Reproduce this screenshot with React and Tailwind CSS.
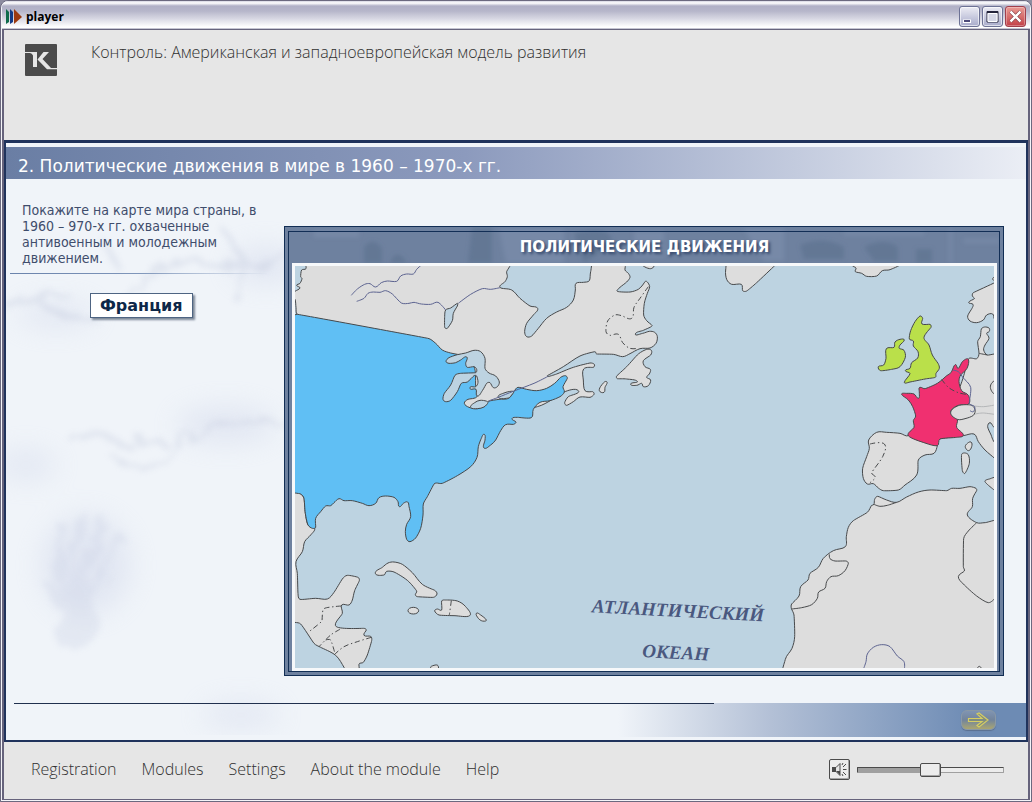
import React, { useState } from "react";

const MENU_ITEMS = ["Registration", "Modules", "Settings", "About the module", "Help"];

// ---- Map data: every group of points is local to its own origin ----
const NORTH_AMERICA = "69,120 66,146 53,150 50,170 54,176 48,190 38,196 48,204 33,214 20,225 33,238 36,262 40,283 200,400 500,600 760,560 840,516 883,512 853,530 842,548 848,556 868,545 888,531 918,532 930,523 926,515 903,512 898,480 899,447 928,442 931,433 918,429 868,442 818,462 792,470 790,467 838,440 888,408 933,395 938,402 988,403 1016,410 1038,401 1068,386 1098,384 1116,370 1120,350 1112,337 1096,334 1076,340 1054,342 1078,331 1098,322 1104,316 1088,302 1079,285 1081,250 1090,220 1097,200 1090,186 1084,184 1076,195 1063,208 1038,216 1000,214 1008,202 1028,186 1038,172 1033,160 1023,150 1020,120 933,120 920,155 916,182 898,187 876,190 874,210 868,240 848,262 818,276 788,295 763,325 743,348 728,350 722,335 728,310 748,285 761,265 738,258 708,235 683,210 648,202 663,185 670,170 668,155 680,120";
const USA = "40,283 432,355 455,370 475,390 500,399 520,403 548,410 572,445 575,500 580,529 552,538 541,550 555,562 580,566 602,558 614,544 645,538 674,535 690,514 702,502 728,508 758,512 788,505 812,490 830,472 844,467 850,475 837,500 841,516 828,530 798,542 768,547 748,568 742,593 700,592 684,596 696,606 688,613 665,614 650,632 635,660 620,675 600,684 603,660 601,643 592,655 583,680 579,712 560,740 520,767 475,790 458,789 450,792 430,830 418,852 417,885 410,925 395,954 378,965 368,958 364,935 368,913 380,890 375,860 371,846 358,850 346,860 342,845 330,832 305,828 285,833 275,850 255,857 235,850 205,842 180,842 165,836 150,848 140,857 125,858 110,875 95,895 95,922 85,925 72,915 64,880 60,835 50,822 20,810 20,310";
const CENTRAL_AMERICA = "20,270 50,282 60,295 64,340 72,375 92,385 80,405 62,425 55,455 36,485 40,520 42,580 48,598 95,595 130,597 150,577 175,537 190,526 222,532 226,542 212,572 205,600 195,615 173,615 175,640 157,680 240,685 247,690 240,706 260,709 263,722 250,765 238,787 225,792 224,830 195,830 180,802 155,766 110,742 90,730 50,672 20,660";
const GREAT_LAKES = "486,424 495,413 520,404 545,399 570,391 590,395 603,415 603,445 615,459 635,468 646,486 640,500 628,503 618,488 608,490 595,512 580,528 576,508 560,508 560,500 575,500 582,487 578,468 570,467 550,486 532,490 520,515 500,541 485,545 477,538 481,520 500,495 513,466 530,460 575,458 578,448 570,440 550,442 545,430 548,411 530,420 515,428 495,430";
const EUROPE = "355,297 380,296 387,280 383,245 391,230 394,207 404,201 417,204 418,214 410,220 417,235 405,255 401,270 412,285 450,287 450,610 434,595 405,570 385,545 372,522 340,527 265,537 262,557 252,580 225,585 205,600 200,645 165,675 145,690 100,692 85,684 70,671 52,672 40,655 38,625 50,590 58,565 56,540 80,517 110,517 150,520 175,527 240,480 320,400";
const FRANCE = "355,298 351,325 332,345 327,365 335,392 355,406 356,432 325,436 302,456 322,478 320,502 340,525 320,532 270,537 262,557 225,549 175,527 192,502 190,482 197,468 188,440 175,420 155,403 170,400 192,402 205,415 208,400 207,384 213,382 225,386 262,370 290,347 303,338 312,318 318,314 325,325 338,304";
const BRITAIN = "210,168 218,175 216,192 240,193 243,202 222,232 237,255 247,285 264,310 268,325 258,340 256,352 225,357 180,366 163,367 180,341 166,332 180,325 185,308 203,294 204,275 190,258 190,243 178,237 182,212 195,185";
const IRELAND = "163,240 150,238 135,246 132,262 109,266 108,295 101,315 85,320 92,332 125,328 150,320 166,292 162,271 148,265 150,255";
const AFRICA = "618,55 600,50 570,55 545,55 530,62 480,60 445,66 410,81 380,97 350,90 323,79 314,88 312,103 304,107 292,127 250,152 235,172 229,200 226,230 190,242 160,265 145,292 120,310 114,330 92,350 87,378 65,402 64,415 72,435 74,500 66,535 46,568 45,630 720,630 720,158 645,158 620,158 592,135 607,110 608,85 620,62";

const STROKE = "#47494b";
const RIVER = "#5c6390";
const LAND = "#dddddd";
const SEA = "#bdd3e1";

// Turns "x,y x,y ..." into a soft curve; the handles never outgrow the shorter neighbour
function curve(text, closed = true) {
  const pts = text.split(" ").map((p) => p.split(",").map(Number));
  const n = pts.length;
  const at = (i) => (closed ? pts[(i + n) % n] : pts[Math.max(0, Math.min(n - 1, i))]);
  const handle = (i, dir) => {
    const [a, b, c] = [at(i - 1), at(i), at(i + 1)];
    const len = Math.hypot(c[0] - a[0], c[1] - a[1]) || 1;
    const before = Math.hypot(b[0] - a[0], b[1] - a[1]);
    const after = Math.hypot(c[0] - b[0], c[1] - b[1]);
    const k = (0.34 * Math.min(before, after) * dir) / len;
    return `${(b[0] + (c[0] - a[0]) * k).toFixed(1)},${(b[1] + (c[1] - a[1]) * k).toFixed(1)}`;
  };
  let d = `M${pts[0]}`;
  for (let i = 0; i < (closed ? n : n - 1); i++) {
    d += ` C${handle(i, 1)} ${handle(i + 1, -1)} ${at(i + 1)}`;
  }
  return closed ? `${d} Z` : d;
}

const Region = ({ points, fill = LAND }) => <path d={curve(points)} fill={fill} />;
const Line = ({ points, stroke = STROKE, dashed = false }) => (
  <path d={curve(points, false)} fill="none" stroke={stroke} strokeDasharray={dashed ? "16 8 4 8" : undefined} />
);

const AtlanticMap = () => (
  <svg viewBox="33 138 2097 1206" className="block w-full bg-[#bdd3e1]" role="img" aria-label="Политические движения">
    <g stroke={STROKE} strokeWidth="3" strokeLinejoin="round">
      <Region points={NORTH_AMERICA} />
      <g transform="translate(0 540)">
        <Region points={CENTRAL_AMERICA} />
      </g>
      <Region points={USA} fill="#60bff4" />
      <Region points={GREAT_LAKES} fill={SEA} />
      <Region points="560,562 572,548 588,541 606,543 612,548 600,561 580,566" fill={SEA} />
      <Region points="643,532 663,518 688,514 683,525 673,534" fill={SEA} />
      <Region points="485,270 500,264 520,250 520,258 508,280 505,302 490,325 482,322 482,290" fill={SEA} />
      <Line stroke={RIVER} points="613,543 643,532 690,513 750,490 792,469" />
      <Line stroke={RIVER} points="202,226 220,207 242,193 258,191 275,201 292,188 310,183 338,184 350,168 368,162 388,162 398,148 411,136" />
      <Line stroke={RIVER} points="218,244 240,235 252,220 268,216 288,217 305,212 325,222 352,249 375,250 390,247 412,252 440,253 462,247 485,270" />
      <Line stroke={RIVER} points="523,250 560,223 595,206 620,208 648,203" />

      {/* Labrador, Newfoundland */}
      <g transform="translate(438 0)">
        <Line dashed points="655,200 630,235 612,262 605,295 575,287 555,285 533,303 528,335 540,346 565,343 578,368 600,385 625,385" />
        <Region points="560,468 590,440 625,402 650,388 664,391 662,405 640,422 645,440 661,448 658,462 650,472 662,480 655,497 640,500 635,490 620,496 602,492 622,484 590,477 562,476" />
        <Region points="530,485 515,495 508,512 522,517 525,502" />
        <Region points="635,130 645,141 662,146 672,138 665,120" />
      </g>

      {/* Central America borders and the Caribbean */}
      <g transform="translate(0 540)">
        <Line dashed points="172,618 150,620 120,626 115,645 112,665 75,695" />
        <Line dashed points="168,688 140,705 105,740" />
        <Line dashed points="125,720 140,720 152,757" />
        <Line dashed points="262,712 220,725 180,740 150,765" />
        <Region points="274,520 295,502 312,489 330,486 355,493 385,518 415,553 452,571 459,582 448,592 400,590 394,584 398,573 370,541 330,516 308,514 300,525" />
        <ellipse cx="388" cy="632" rx="16" ry="10" fill={LAND} />
        <Region points="452,633 460,627 473,630 473,603 485,600 520,603 545,620 557,647 510,647 465,645" />
        <Line dashed points="502,602 496,645" />
        <Region points="577,640 590,645 607,660 595,663 583,655" />
        <Region points="440,803 450,796 462,797 460,812" />
      </g>

      {/* Greenland, Iceland */}
      <g transform="translate(1188 0)">
        <Region points="148,120 137,150 140,178 155,193 184,193 188,212 200,213 230,188 284,137 300,120" />
        <Region points="510,120 517,137 528,144 526,155 545,160 560,169 590,168 607,152 630,149 660,130" />
      </g>

      <g transform="translate(1698 120)">
        <Region points="450,55 434,68 370,98 367,108 373,116 356,127 369,133 366,145 353,168 360,183 380,188 400,180 410,165 428,162 434,178 450,180" />
        <Region points="450,45 434,50 428,57 434,62 450,62" />
        <Region points={EUROPE} />
        <Region points={FRANCE} fill="#f03070" />
        <Region points="302,458 325,437 362,435 375,448 370,466 345,476 322,478" />
        <Line stroke="#b4b6b8" points="365,437 400,440 440,434" />
        <Line stroke="#b4b6b8" points="375,462 400,459 440,464" />
        <Line points="387,280 412,285" />
        <Line points="440,358 426,368 421,382 428,398 440,404" />
        <Line stroke={RIVER} points="308,330 325,335 340,354 362,382 358,430 374,440 370,455 360,452" />
        <Line dashed points="275,358 295,382 325,398 355,404" />
        <Region points="420,488 413,500 422,522 440,550 450,520 430,500" fill={SEA} />
        <Region points={BRITAIN} fill="#bae04a" />
        <Region points={IRELAND} fill="#bae04a" />
        <Region points="363,546 350,552 346,562 356,572 365,560" />
        <Region points="335,583 354,583 358,610 345,640 337,632" />
        <Region points="405,665 418,657 450,654 450,700 430,688" />
        <Line dashed points="60,552 103,552 98,590 65,638 76,652 60,668" />
      </g>

      <g transform="translate(1458 750)">
        <Region points={AFRICA} />
        <Line points="312,103 330,109 352,106 380,97" />
        <Line points="178,253 180,266 195,273 228,273 235,280 225,302 205,317 183,320 170,335 165,355 146,366 142,385 125,404 95,413 64,417" />
        <Line points="620,158 595,183 581,206 580,290 583,303 565,320 580,342 620,378 655,398 675,385" />
        <Line stroke={RIVER} points="280,598 288,575 292,552 310,532 335,524 360,530 382,558 402,575 403,598" />
        <Line points="622,594 628,589 634,594" />
      </g>
    </g>

    <g transform="translate(828 1080)" fill="#4a587f" fontFamily="'Liberation Serif', serif" fontSize="57" fontWeight="700" fontStyle="italic">
      <text transform="translate(95 97) rotate(3)">АТЛАНТИЧЕСКИЙ</text>
      <text transform="translate(246 231) rotate(3)">ОКЕАН</text>
    </g>
  </svg>
);

// Faint marble veins and a hand print on the wall behind the task
const MarbleBackdrop = () => (
  <svg viewBox="0 0 300 560" className="pointer-events-none absolute top-8 left-0 w-[300px]" aria-hidden="true">
    <defs>
      <filter id="vein" x="-20%" y="-20%" width="140%" height="140%">
        <feTurbulence type="fractalNoise" baseFrequency="0.06" numOctaves="3" seed="4" result="noise" />
        <feDisplacementMap in="SourceGraphic" in2="noise" scale="18" />
        <feGaussianBlur stdDeviation="3" />
      </filter>
      <filter id="cloud" x="-50%" y="-50%" width="200%" height="200%">
        <feGaussianBlur stdDeviation="14" />
      </filter>
    </defs>
    <g fill="#ccd3e8" opacity="0.4" filter="url(#cloud)">
      <ellipse cx="50" cy="140" rx="40" ry="12" />
      <ellipse cx="20" cy="290" rx="30" ry="14" />
      <ellipse cx="260" cy="90" rx="35" ry="18" />
      <ellipse cx="80" cy="390" rx="45" ry="50" />
      <ellipse cx="235" cy="540" rx="40" ry="12" />
      <ellipse cx="220" cy="250" rx="50" ry="18" />
    </g>
    <g fill="none" stroke="#c0c7db" strokeWidth="5" opacity="0.35" filter="url(#vein)">
      <path d="M212 50 Q228 65 238 88 Q262 100 290 68 M238 88 Q215 95 185 85 Q140 90 115 135 M238 88 Q240 110 228 125" />
      <path d="M95 65 Q108 80 110 92 M0 132 Q40 115 65 122 M30 125 Q60 145 90 145" />
      <path d="M105 280 Q140 305 165 280 Q200 235 285 250 M60 262 Q105 255 130 280 M115 275 Q135 260 160 270" />
    </g>
    <g fill="none" stroke="#cdd4e6" strokeWidth="8" strokeLinecap="round" opacity="0.35" filter="url(#vein)">
      <path d="M53 405 L55 350 M65 400 L77 340 M77 402 L97 345 M87 412 L115 362 M53 430 L43 410" />
      <path d="M70 420 Q80 440 67 460" strokeWidth="34" />
    </g>
  </svg>
);

const FrameBackdrop = () => (
  <svg viewBox="0 0 720 36" preserveAspectRatio="xMidYMin slice" className="absolute top-0 left-0 h-9 w-full" aria-hidden="true">
    <defs>
      <filter id="soft">
        <feGaussianBlur stdDeviation="2" />
      </filter>
    </defs>
    <g filter="url(#soft)">
      <path fill="#5c6f8e" opacity="0.6" d="M80 36 V20 Q90 8 98 22 V36Z M106 36 Q112 20 122 34 V36Z M188 0 H208 V36 H184Z M290 6 Q330 -4 328 18 L300 36Z M516 18 Q540 8 560 20 V32 H520Z M580 20 Q600 10 614 20 V34 H590Z M632 22 H648 V36 H632Z" />
      <path fill="#8b9cb8" opacity="0.3" d="M30 4 H75 V10 H30Z M215 2 H280 V36 H222Z M350 4 H380 V30 H350Z M460 2 H500 V34 H480Z M560 4 H640 V8 H560Z M665 2 H668 V36 H665Z M680 12 H715 V16 H680Z" />
    </g>
  </svg>
);

const PlayerIcon = () => (
  <svg width="17" height="16" viewBox="0 0 17 16" aria-hidden="true">
    <path d="M1 0 L4 3 V13 L1 15Z" fill="#0f6b4b" />
    <path d="M5 0 L8 3 V13 L5 15Z" fill="#123a86" />
    <path d="M9 0 L17 8 L9 15Z" fill="#9c3a10" />
  </svg>
);

const Logo = () => (
  <svg width="32" height="32" viewBox="0 0 32 32" className="shrink-0" aria-hidden="true">
    <rect width="32" height="32" rx="1" fill="#4b4b4b" />
    <path d="M0 8 H12 V23 H8 V11.500 Q7 9 5 9 H0Z" fill="#e6e6e6" />
    <path d="M18.500 8 H24 L17.500 15 L26 24 H32 V25.200 H22 L12.500 15.500Z" fill="#e6e6e6" />
  </svg>
);

const WINDOW_BUTTON = "flex size-[21px] items-center justify-center rounded-[3px] border border-[#6d7295] ring-1 ring-white/60 ring-inset";

const TitleBar = () => (
  <header className="flex h-7 items-center justify-between rounded-t-md border-b border-[#c5c5d2] bg-[linear-gradient(#d5d5e2_0px,#ffffff_2px,#b0b0c6_5px,#b6b6ca_10px,#d9d9e4_18px,#ffffff_26px)] pt-1 pr-1 pl-[3px]">
    <div className="flex items-center gap-1">
      <PlayerIcon />
      <h1 className="font-['Open_Sans','Noto_Sans',sans-serif] text-xs font-bold text-black">player</h1>
    </div>
    <div className="flex gap-[2px]">
      <button type="button" aria-label="Minimize" className={`${WINDOW_BUTTON} bg-linear-to-b from-[#ececf4] to-[#a9accb]`}>
        <svg width="13" height="13" viewBox="0 0 13 13">
          <path d="M0 9.500 H8 V13 H0Z" fill="#fff" />
          <path d="M1 10 H7 V12 H1Z" fill="#4c4a78" />
        </svg>
      </button>
      <button type="button" aria-label="Maximize" className={`${WINDOW_BUTTON} bg-linear-to-b from-[#ececf4] to-[#a9accb]`}>
        <svg width="13" height="13" viewBox="0 0 13 13">
          <path d="M1 1.500 H12 V12 H1Z" fill="#d5d7e6" stroke="#23233a" />
          <path d="M1 2 H12" stroke="#23233a" strokeWidth="2" />
          <path d="M2 3.500 H11 V11.500 H2Z" fill="none" stroke="#fff" />
        </svg>
      </button>
      <button type="button" aria-label="Close" className="flex size-[21px] items-center justify-center rounded-[3px] border border-[#a13f4c] bg-linear-to-b from-[#e99a94] to-[#c23f48] ring-1 ring-white/30 ring-inset">
        <svg width="13" height="13" viewBox="0 0 13 13">
          <path d="M1.500 1.500 L11.500 11.500 M11.500 1.500 L1.500 11.500" stroke="#6d2430" strokeWidth="3.500" />
          <path d="M1.500 1.500 L11.500 11.500 M11.500 1.500 L1.500 11.500" stroke="#fff" strokeWidth="2.500" />
        </svg>
      </button>
    </div>
  </header>
);

const VolumeControl = () => {
  const [volume, setVolume] = useState(50);
  const [muted, setMuted] = useState(false);

  return (
    <div className="flex items-center gap-[7px]">
      <button
        type="button"
        aria-label="Sound"
        aria-pressed={muted}
        onClick={() => setMuted(!muted)}
        className="flex size-[21px] items-center justify-center rounded-[2px] border border-[#4b4b4b] bg-[#ececec] shadow-[inset_-1px_-1px_0_#a5a5a5]"
      >
        <svg width="17" height="15" viewBox="0 0 17 15">
          <path d="M1 5 H5 V10 H1Z" fill="#4b4b4b" />
          <path d="M5 5.500 L9 1.500 V13.500 L5 9.500" fill="#e6e6e6" stroke="#4b4b4b" />
          <path d="M5 9 H9 V13Z" fill="#4b4b4b" />
          <path d="M12 5 L15 2 M12 7.500 H15.500 M12 10 L15 13 M11 3 L12 1 M11 12 L12 14" stroke="#4b4b4b" />
        </svg>
      </button>
      <input
        type="range"
        aria-label="Volume"
        min="0"
        max="100"
        value={volume}
        onChange={(e) => setVolume(Number(e.target.value))}
        style={{ "--level": `${volume}%` }}
        className="h-[15px] w-[147px] appearance-none bg-transparent [&::-webkit-slider-runnable-track]:h-[6px] [&::-webkit-slider-runnable-track]:rounded-[1px] [&::-webkit-slider-runnable-track]:border [&::-webkit-slider-runnable-track]:border-t-[#4b4b4b] [&::-webkit-slider-runnable-track]:border-r-[#a0a0a0] [&::-webkit-slider-runnable-track]:border-b-[#a0a0a0] [&::-webkit-slider-runnable-track]:border-l-[#4b4b4b] [&::-webkit-slider-runnable-track]:bg-[linear-gradient(to_right,#a0a0a0_var(--level),#ececec_var(--level))] [&::-webkit-slider-thumb]:-mt-[5px] [&::-webkit-slider-thumb]:h-[14px] [&::-webkit-slider-thumb]:w-[21px] [&::-webkit-slider-thumb]:appearance-none [&::-webkit-slider-thumb]:rounded-[2px] [&::-webkit-slider-thumb]:border [&::-webkit-slider-thumb]:border-[#4b4b4b] [&::-webkit-slider-thumb]:bg-[#ececec] [&::-webkit-slider-thumb]:shadow-[inset_-1px_-1px_0_#a5a5a5]"
      />
    </div>
  );
};

const TaskPanel = () => (
  <aside className="w-[278px] shrink-0 pt-[23px]">
    <p className="pr-4 pl-4 font-['DejaVu_Sans_Condensed','DejaVu_Sans',sans-serif] text-[14px] leading-4 text-[#3f4d6c]">
      Покажите на карте мира страны, в 1960 – 970-х гг. охваченные антивоенным и молодежным движением.
    </p>
    <div className="mt-[7px] mr-4 ml-1 h-px bg-linear-to-r from-[#6a83ac] via-[#7f96ba] to-transparent" />
    <button
      type="button"
      className="mt-[19px] ml-[84px] block h-[25px] border border-[#4e6482] bg-white px-[9px] font-['DejaVu_Sans',sans-serif] text-base leading-5 font-bold text-[#0d2748] shadow-[2px_2px_2px_#7c8798]"
    >
      Франция
    </button>
  </aside>
);

const MapPanel = () => (
  <figure className="relative mt-[47px] min-w-0 flex-1 self-start border border-[#122e55] bg-[#6e819f] px-[3px] pt-1 pb-[3px]">
    <FrameBackdrop />
    <div className="relative border border-[#122e55] pr-[2px] pl-[3px]">
      <figcaption className="flex h-[31px] items-center justify-center font-['DejaVu_Sans',sans-serif] text-[15px] font-bold text-white [text-shadow:2px_2px_3px_#33466a]">
        ПОЛИТИЧЕСКИЕ ДВИЖЕНИЯ
      </figcaption>
      <div className="border-[3px] border-[#f6f8fa]">
        <AtlanticMap />
      </div>
    </div>
  </figure>
);

export default function App() {
  return (
    <div className="bg-[#8d8ca0]">
      <div className="flex min-h-screen flex-col rounded-t-lg border border-[#6b697f] bg-[#f4f4f8] px-px pb-px">
        <TitleBar />
        <div className="flex flex-1 flex-col border border-x-2 border-[#66637c] bg-[#e6e6e6]">
          <div className="flex h-[110px] items-start gap-[34px] pt-[14px] pl-[21px]">
            <Logo />
            <h2 className="font-['Open_Sans','Noto_Sans',sans-serif] text-base leading-4 font-light text-[#303030]">
              Контроль: Американская и западноевропейская модель развития
            </h2>
          </div>

          <main className="relative flex flex-1 flex-col border-2 border-t-[3px] border-[#20335c] bg-[#f0f4f9] pt-1 pb-[3px]">
            <MarbleBackdrop />
            <h3 className="relative flex h-8 items-center bg-linear-to-r from-[#6a7ea4] via-[#8c9abd] via-45% to-[#ebeef5] pt-[6px] pl-3 font-['DejaVu_Sans',sans-serif] text-[17px] leading-5 text-white">
              2. Политические движения в мире в 1960 – 1970-х гг.
            </h3>
            <div className="relative flex flex-1 pr-[22px] pb-[26px]">
              <TaskPanel />
              <MapPanel />
            </div>
            <div className="relative flex h-[34px] items-center justify-end bg-linear-to-r from-transparent from-60% via-[#b3c0d6] via-75% to-[#6d8bb4] to-95% pr-[30px]">
              <div className="absolute top-0 left-2 h-px w-full max-w-[700px] bg-[#20304e]" />
              <button
                type="button"
                aria-label="Next"
                className="flex h-5 w-[35px] items-center justify-center rounded-md border border-[#8a99a6] bg-linear-to-b from-[#8094b2] via-[#72849b] to-[#aaa56f] shadow-[0_1px_1px_#5a6f90]"
              >
                <svg width="24" height="16" viewBox="0 0 24 16">
                  <path d="M1.500 6.500 H15 L10 2 L12 1 L21 8 L12 15 L10 13.500 L15 9.500 H1.500Z" fill="#7f8c80" stroke="#d6cd62" strokeWidth="1.200" />
                </svg>
              </button>
            </div>
          </main>

          <footer className="flex h-[57px] items-center justify-between pr-6 pb-[2px] pl-[27px]">
            <nav className="flex gap-[25px] pb-[2px] font-['Open_Sans','Noto_Sans',sans-serif] text-base font-light text-[#303030]">
              {MENU_ITEMS.map((item) => (
                <a key={item} href={`#${item.toLowerCase().replace(/\s+/g, "-")}`}>
                  {item}
                </a>
              ))}
            </nav>
            <VolumeControl />
          </footer>
        </div>
      </div>
    </div>
  );
}
